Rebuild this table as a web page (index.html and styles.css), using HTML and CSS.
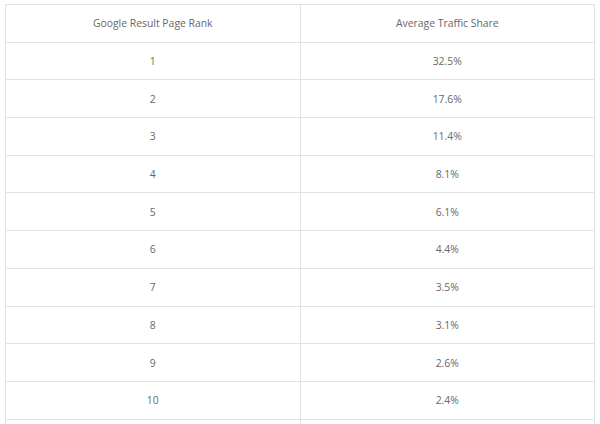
FILE: index.html
```html
<!DOCTYPE html>
<html>
<head>
<meta charset="utf-8">
<link rel="stylesheet" href="styles.css">
</head>
<body>
<table class="rank-table">
  <thead>
    <tr><th>Google Result Page Rank</th><th>Average Traffic Share</th></tr>
  </thead>
  <tbody>
    <tr><td>1</td><td>32.5%</td></tr>
    <tr><td>2</td><td>17.6%</td></tr>
    <tr><td>3</td><td>11.4%</td></tr>
    <tr><td>4</td><td>8.1%</td></tr>
    <tr><td>5</td><td>6.1%</td></tr>
    <tr><td>6</td><td>4.4%</td></tr>
    <tr><td>7</td><td>3.5%</td></tr>
    <tr><td>8</td><td>3.1%</td></tr>
    <tr><td>9</td><td>2.6%</td></tr>
    <tr><td>10</td><td>2.4%</td></tr>
    <tr><td></td><td></td></tr>
  </tbody>
</table>
</body>
</html>
```
FILE: styles.css
```css
html, body {
  margin: 0;
  padding: 0;
  background: #ffffff;
  overflow: hidden;
}
body {
  padding: 4px 0 0 5px;
  font-family: "Open Sans", "Liberation Sans", sans-serif;
}
.rank-table {
  border-collapse: collapse;
  width: 590px;
  table-layout: fixed;
}
.rank-table th,
.rank-table td {
  border: 1px solid #e3e3e3;
  height: 36.7px;
  padding: 0;
  text-align: center;
  vertical-align: middle;
  font-size: 10.4px;
  font-weight: 400;
  color: #686868;
}
```
